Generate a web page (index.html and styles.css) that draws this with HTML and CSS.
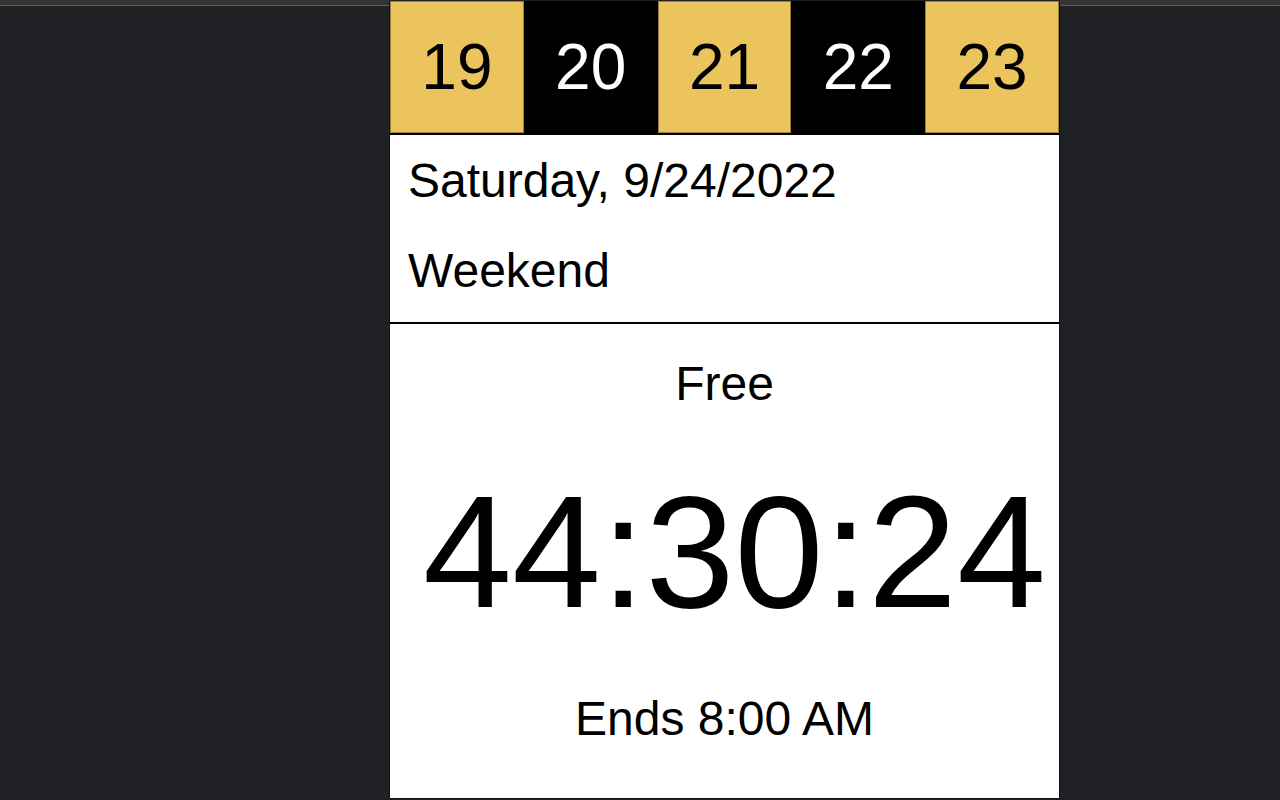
FILE: index.html
```html
<!DOCTYPE html>
<html lang="en">
<head>
<meta charset="utf-8">
<title>Schedule</title>
<link rel="stylesheet" href="styles.css">
</head>
<body>
<main class="panel">
  <div class="days">
    <div class="day day-odd">19</div>
    <div class="day day-even">20</div>
    <div class="day day-odd">21</div>
    <div class="day day-even">22</div>
    <div class="day day-odd">23</div>
  </div>
  <section class="info">
    <div class="info-line">Saturday, 9/24/2022</div>
    <div class="info-line">Weekend</div>
  </section>
  <section class="status">
    <div class="status-label">Free</div>
    <div class="timer">44:30:24</div>
    <div class="status-end">Ends 8:00 AM</div>
  </section>
</main>
</body>
</html>
```

FILE: styles.css
```css
html, body {
  margin: 0;
  padding: 0;
  height: 100%;
}

body {
  background: linear-gradient(#353535 0 5px, #5a5a5a 5px 6px, #202124 6px);
  font-family: "Liberation Sans", Arial, Helvetica, sans-serif;
  color: #000;
  overflow: hidden;
}

.panel {
  margin-left: 389px;
  width: 669px;
  border: 1px solid #111;
  border-top: 1px solid #222;
  background: #fff;
}

.days {
  display: flex;
  border-bottom: 2px solid #000;
}

.day {
  flex: 1;
  height: 132px;
  line-height: 132px;
  text-align: center;
  font-size: 64px;
}

.day-odd {
  background: #ecc45e;
  color: #000;
  box-shadow: inset 0 0 0 1px rgba(0, 0, 0, 0.35);
}

.day-even {
  background: #000;
  color: #fff;
}

.info {
  padding: 1px 0 6px 18px;
  border-bottom: 2px solid #000;
  font-size: 48px;
}

.info-line {
  line-height: 90px;
}

.status {
  display: flex;
  flex-direction: column;
  align-items: center;
  height: 474px;
  padding-top: 30px;
  box-sizing: border-box;
}

.status-label,
.status-end {
  font-size: 48px;
  line-height: 60px;
}

.timer {
  margin-top: 48px;
  padding-left: 20px;
  font-size: 160px;
  line-height: 180px;
}

.status-end {
  margin-top: 47px;
}
```
